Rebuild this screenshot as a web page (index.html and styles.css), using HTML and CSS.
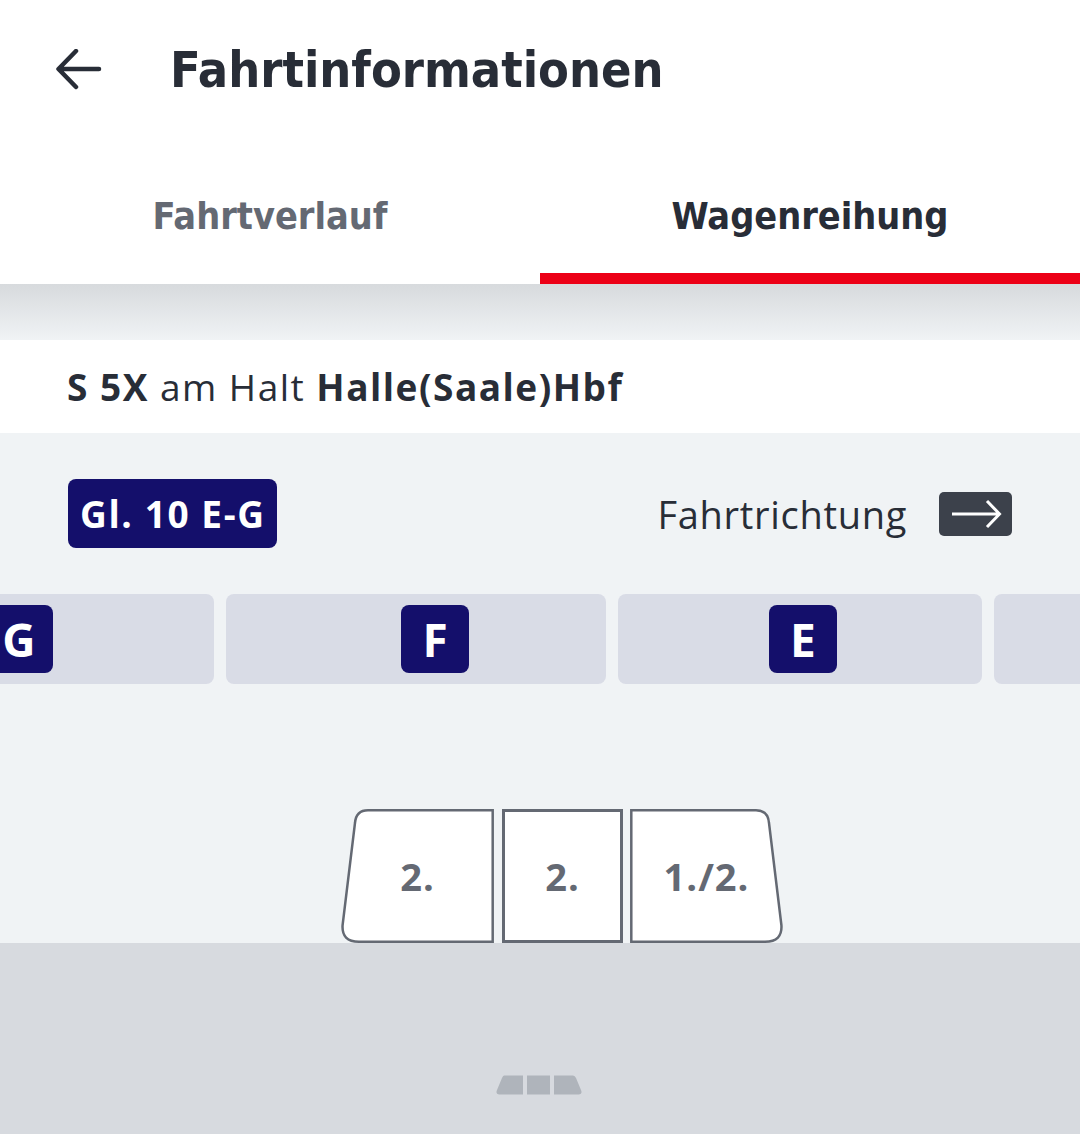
FILE: index.html
```html
<!DOCTYPE html>
<html lang="de">
<head>
<meta charset="utf-8">
<title>Fahrtinformationen</title>
<link rel="stylesheet" href="styles.css">
</head>
<body>
<div class="app">
  <header class="topbar">
    <svg class="back" width="50" height="44" viewBox="0 0 50 44">
      <path d="M44 20 H4 M21 2 L3.5 20 L21 38" fill="none" stroke="#282d37" stroke-width="4.5" stroke-linecap="round" stroke-linejoin="round"/>
    </svg>
    <h1 class="title">Fahrtinformationen</h1>
  </header>
  <nav class="tabs">
    <div class="tab">Fahrtverlauf</div>
    <div class="tab active">Wagenreihung</div>
  </nav>
  <div class="shade"></div>
  <div class="halt"><b>S 5X</b> am Halt <b>Halle(Saale)Hbf</b></div>
  <main class="platform">
    <div class="inforow">
      <div class="gleis">Gl. 10 E-G</div>
      <div class="richtung">
        <span>Fahrtrichtung</span>
        <span class="dirbox">
          <svg width="73" height="44" viewBox="0 0 73 44">
            <path d="M13 22 H60 M48 9 L60.5 22 L48 35" fill="none" stroke="#fff" stroke-width="3"/>
          </svg>
        </span>
      </div>
    </div>
    <div class="sectors">
      <div class="sector s-g"><span class="letter">G</span></div>
      <div class="sector s-f"><span class="letter">F</span></div>
      <div class="sector s-e"><span class="letter">E</span></div>
      <div class="sector s-d"></div>
    </div>
    <div class="train">
      <div class="car end">
        <svg width="153" height="134" viewBox="0 0 153 134">
          <path d="M151.7 1.3 H27 Q15 1.3 14 14 L1.6 116 Q0.4 132.7 18 132.7 H151.7 Z" fill="#fff" stroke="#646973" stroke-width="2.5"/>
        </svg>
        <span class="cls">2.</span>
      </div>
      <div class="car mid"><span class="cls">2.</span></div>
      <div class="car end">
        <svg width="153" height="134" viewBox="0 0 153 134">
          <path d="M1.3 1.3 H126 Q138 1.3 139 14 L151.4 116 Q152.6 132.7 135 132.7 H1.3 Z" fill="#fff" stroke="#646973" stroke-width="2.5"/>
        </svg>
        <span class="cls">1./2.</span>
      </div>
    </div>
  </main>
  <footer class="overview">
    <svg width="86" height="20" viewBox="0 0 86 20">
      <path d="M8 0.5 H27 V19.5 H3 Q-0.5 19.5 0.8 15.5 L6 3 Q7 0.5 8 0.5 Z" fill="#afb4bb"/>
      <rect x="31" y="0.5" width="23" height="19" fill="#afb4bb"/>
      <path d="M58 0.5 H77 Q79 0.5 80 3 L85.2 15.5 Q86.5 19.5 83 19.5 H58 Z" fill="#afb4bb"/>
    </svg>
  </footer>
</div>
</body>
</html>
```

FILE: styles.css
```css
* { box-sizing: border-box; }
html, body { margin: 0; padding: 0; }
body {
  width: 1080px;
  height: 1134px;
  overflow: hidden;
  background: #d7dadf;
  font-family: "Open Sans", "Noto Sans", sans-serif;
  color: #282d37;
}
.app { display: flex; flex-direction: column; height: 1134px; }

.topbar {
  height: 140px;
  background: #fff;
  display: flex;
  align-items: center;
  padding-left: 55px;
}
.back { display: block; margin-top: 2px; }
.title {
  margin: 0 0 0 65px;
  font-family: "DejaVu Sans Condensed", sans-serif;
  font-weight: 700;
  font-size: 50px;
  line-height: 1;
  color: #282d37;
}

.tabs {
  height: 144px;
  background: #fff;
  display: flex;
}
.tab {
  flex: 1;
  display: flex;
  justify-content: center;
  align-items: center;
  padding-top: 19px;
  font-family: "DejaVu Sans Condensed", sans-serif;
  font-weight: 700;
  font-size: 37.5px;
  color: #646973;
  border-bottom: 11px solid transparent;
}
.tab.active { color: #282d37; border-bottom-color: #ec0016; }

.shade {
  height: 56px;
  background: linear-gradient(#d7dadd, #f0f3f5);
}

.halt {
  height: 93px;
  background: #fff;
  padding-left: 67px;
  display: flex;
  align-items: center;
  font-size: 37px;
  letter-spacing: 1.5px;
  color: #282d37;
  white-space: pre;
}
.halt b { font-weight: 700; }

.platform {
  height: 510px;
  background: #f0f3f5;
  overflow: hidden;
  padding-top: 46px;
}
.inforow {
  display: flex;
  justify-content: space-between;
  align-items: center;
  padding: 0 68px;
  height: 69px;
}
.gleis {
  background: #140f6b;
  color: #fff;
  font-weight: 700;
  font-size: 37px;
  letter-spacing: 1.6px;
  height: 69px;
  padding: 0 11px 0 12px;
  border-radius: 8px;
  display: flex;
  align-items: center;
}
.richtung {
  display: flex;
  align-items: center;
  gap: 32px;
  font-size: 38px;
  letter-spacing: 0.7px;
  color: #282d37;
}
.dirbox {
  display: block;
  width: 73px;
  height: 44px;
  background: #3c414b;
  border-radius: 5px;
}
.dirbox svg { display: block; }

.sectors {
  display: flex;
  gap: 12px;
  margin-top: 46px;
  margin-left: -86px;
  height: 90px;
}
.sector {
  flex: none;
  background: #d9dce6;
  border-radius: 8px;
  height: 90px;
  display: flex;
  align-items: center;
}
.s-g { width: 300px; padding-left: 71px; }
.s-f { width: 380px; padding-left: 175px; }
.s-e { width: 364px; padding-left: 151px; }
.s-d { width: 200px; }
.letter {
  width: 68px;
  height: 68px;
  border-radius: 8px;
  background: #140f6b;
  color: #fff;
  font-weight: 700;
  font-size: 46px;
  display: flex;
  align-items: center;
  justify-content: center;
}

.train {
  display: flex;
  margin-top: 125px;
  margin-left: 341px;
  gap: 7px;
  height: 134px;
}
.car {
  position: relative;
  height: 134px;
  display: flex;
  align-items: center;
  justify-content: center;
}
.car.end { width: 153px; }
.car svg { position: absolute; left: 0; top: 0; }
.car.mid {
  width: 121px;
  background: #fff;
  border: 3px solid #646973;
  margin-left: 1px;
}
.cls {
  position: relative;
  font-weight: 700;
  font-size: 38px;
  letter-spacing: 1px;
  color: #646973;
}

.overview {
  flex: 1;
  background: #d7dadf;
  display: flex;
  justify-content: center;
  padding-top: 132px;
  padding-right: 3px;
}
.overview svg { display: block; }
```
